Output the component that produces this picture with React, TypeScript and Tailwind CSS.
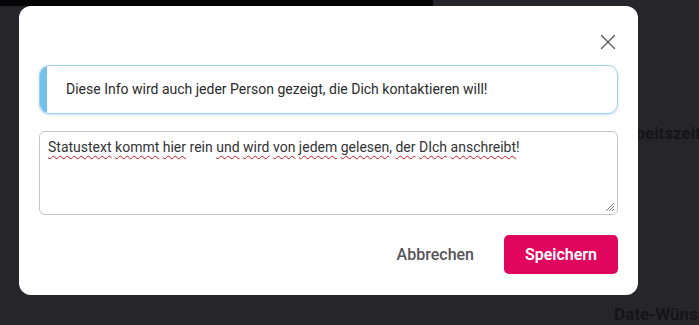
import { X } from "lucide-react";

const words: [string, boolean][] = [
  ["Statustext", true],
  ["kommt", true],
  ["hier", true],
  ["rein", false],
  ["und", true],
  ["wird", true],
  ["von", true],
  ["jedem", true],
  ["gelesen", true],
  ["der", true],
  ["DIch", true],
  ["anschreibt", true],
];

function StatusText() {
  return (
    <>
      {words.map(([w, wrong], i) => {
        const tail = w === "gelesen" ? "," : w === "anschreibt" ? "!" : "";
        return (
          <span key={i}>
            <span
              className={
                wrong
                  ? "underline decoration-wavy decoration-[#c4161c] decoration-1 underline-offset-[3px]"
                  : ""
              }
            >
              {w}
            </span>
            {tail}
            {i < words.length - 1 ? " " : ""}
          </span>
        );
      })}
    </>
  );
}

export default function App() {
  return (
    <div
      className="relative h-[325px] w-[699px] overflow-hidden bg-[#262529]"
      style={{ fontFamily: "Roboto, 'Liberation Sans', sans-serif" }}
    >
      {/* page behind the overlay */}
      <div className="h-[6px] w-[433px] bg-[#050505]" />
      <div className="absolute left-[618px] top-[121px] whitespace-nowrap text-[17px] font-semibold text-[#141416]">
        Arbeitszeiten
      </div>
      <div className="absolute left-[614px] top-[302px] whitespace-nowrap text-[17px] font-semibold text-[#141416]">
        Date-Wünsche
      </div>

      {/* modal */}
      <div className="absolute left-[19px] top-[6px] flex h-[289px] w-[619px] flex-col rounded-[12px] bg-white px-[20px] pb-[21px]">
        <div className="flex h-[59px] items-start justify-end pt-[23px]">
          <button className="-mr-[3px] text-[#555]">
            <X size={26} strokeWidth={1.2} />
          </button>
        </div>

        <div className="flex h-[49px] overflow-hidden rounded-[10px] border border-[#9fd0ec] shadow-[0_1px_3px_rgba(110,170,220,0.35)]">
          <div className="w-[7px] bg-[#72c1ec]" />
          <div className="flex items-center pl-[19px] text-[14px] text-[#2b2b2b]">
            Diese Info wird auch jeder Person gezeigt, die Dich kontaktieren will!
          </div>
        </div>

        <div className="relative mt-[17px] h-[84px] rounded-[6px] border border-[#c4c4c4] px-[8px] pt-[5px] text-[14px] leading-[20px] text-[#333]">
          <StatusText />
          <svg
            className="absolute bottom-[2px] right-[2px]"
            width="12"
            height="12"
            viewBox="0 0 12 12"
          >
            <path d="M11 3 L3 11 M11 6 L6 11 M11 9 L9 11" stroke="#777" strokeWidth="1" />
          </svg>
        </div>

        <div className="mt-auto flex items-center justify-end gap-[30px]">
          <button className="text-[16px] font-medium text-[#555]">Abbrechen</button>
          <button className="h-[39px] w-[114px] rounded-[5px] bg-[#e0065e] text-[16px] font-semibold text-white">
            Speichern
          </button>
        </div>
      </div>
    </div>
  );
}
